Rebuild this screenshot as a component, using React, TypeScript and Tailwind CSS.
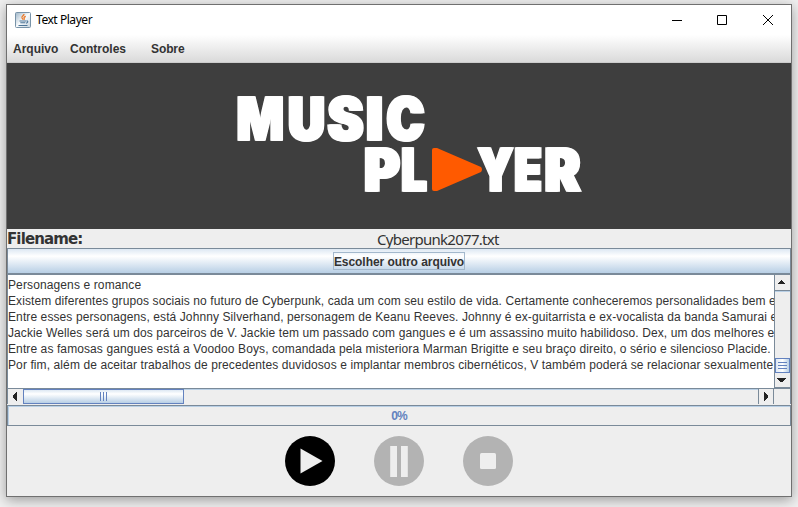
import React from "react";

const lines = [
  { text: "Personagens e romance", track: "tracking-[0.12px]" },
  { text: "Existem diferentes grupos sociais no futuro de Cyberpunk, cada um com seu estilo de vida. Certamente conheceremos personalidades bem e", track: "tracking-[0.095px]" },
  { text: "Entre esses personagens, está Johnny Silverhand, personagem de Keanu Reeves. Johnny é ex-guitarrista e ex-vocalista da banda Samurai e", track: "tracking-[0.1px]" },
  { text: "Jackie Welles será um dos parceiros de V. Jackie tem um passado com gangues e é um assassino muito habilidoso. Dex, um dos melhores e", track: "tracking-[0.095px]" },
  { text: "Entre as famosas gangues está a Voodoo Boys, comandada pela misteriora Marman Brigitte e seu braço direito, o sério e silencioso Placide.", track: "tracking-[0.1px]" },
  { text: "Por fim, além de aceitar trabalhos de precedentes duvidosos e implantar membros cibernéticos, V também poderá se relacionar sexualmente", track: "tracking-[0.1px]" },
];

type Glyph = { c: string; x: number; w: number; y: number };

const glyphs: Glyph[] = [
  { c: "M", x: 229.5, w: 47.5, y: 77 },
  { c: "U", x: 281.5, w: 36, y: 77 },
  { c: "S", x: 321, w: 35, y: 77 },
  { c: "I", x: 359.5, w: 16, y: 77 },
  { c: "C", x: 380, w: 37, y: 77 },
  { c: "P", x: 357.5, w: 35, y: 128 },
  { c: "L", x: 394.5, w: 25, y: 128 },
  { c: "Y", x: 471, w: 35, y: 128 },
  { c: "E", x: 507.5, w: 27, y: 128 },
  { c: "R", x: 538, w: 35, y: 128 },
];

function JavaIcon() {
  return (
    <svg width="16" height="16" viewBox="0 0 16 16" className="shrink-0">
      <defs>
        <linearGradient id="cup" x1="0" y1="0" x2="1" y2="1">
          <stop offset="0" stopColor="#9fb6c8" />
          <stop offset=".5" stopColor="#f7fafc" />
          <stop offset="1" stopColor="#c5d3dd" />
        </linearGradient>
      </defs>
      <rect x=".5" y=".5" width="15" height="15" rx="1" fill="url(#cup)" stroke="#7893a8" />
      <path d="M9 2c.3 1.700-2.800 2.200-2 4 .4.700 1 1 1 1.800M10.800 4.300c-1.800.7-2.200 1.300-1.600 2.100.4.500.1.900-.3 1.300" fill="none" stroke="#e8792b" strokeWidth="1.300" />
      <path d="M4.500 9h6.500M5.300 10.800h5M3.500 13.500h9M11.300 9c2-.5 2 1.800-.3 2.200" fill="none" stroke="#4d7597" strokeWidth="1.100" />
    </svg>
  );
}

function Logo() {
  return (
    <svg width="784" height="166" viewBox="0 0 784 166" className="block shrink-0 bg-[#3e3e3e]">
      {glyphs.map((g) => (
        <text
          key={g.c + g.x}
          x={g.x}
          y={g.y}
          textLength={g.w}
          lengthAdjust="spacingAndGlyphs"
          className={g.c === "M" ? "[text-shadow:0.8px_0_#fff,-0.8px_0_#fff]" : "[text-shadow:1.7px_0_#fff,-1.7px_0_#fff]"}
          fontFamily="Inter, sans-serif"
          fontWeight="900"
          fontSize="59"
          fill="#fff"
          stroke="#fff"
          strokeWidth="1.5"
        >
          {g.c}
        </text>
      ))}
      <path d="M427 85h3l44 19q2 2.500 0 5l-44 19h-3q-2 0-2-2V87q0-2 2-2z" fill="#ff5a00" />
    </svg>
  );
}

function Arrow({ d }: { d: string }) {
  return (
    <svg width="15" height="15" viewBox="0 0 15 15" shapeRendering="crispEdges">
      <path d={d} fill="#222" />
    </svg>
  );
}

export default function App() {
  return (
    <div className="h-[507px] w-[798px] overflow-hidden bg-[#f0f0f0] pl-[6px] pt-1 font-['Liberation_Sans',Arial,sans-serif] text-[#333]">
      <div className="flex h-[493px] w-[786px] flex-col border border-[#707070] bg-[#eee] shadow-[0_3px_12px_rgba(0,0,0,0.36)]">
        <header className="flex h-[30px] shrink-0 items-center bg-white pl-2">
          <JavaIcon />
          <span className="ml-[5px] font-['Noto_Sans',sans-serif] text-[12px] tracking-[-0.45px] text-black">Text Player</span>
          <svg className="ml-auto mr-[17px]" width="103" height="12" viewBox="0 0 103 12" fill="none" stroke="#000">
            <path d="M1 6.500h10M46.500 1.500h9v9h-9zM92 1l10 10M102 1L92 11" />
          </svg>
        </header>
        <nav className="flex h-7 shrink-0 items-center border-b border-[#ccc] bg-linear-to-b from-white to-[#dadada] pl-[6px] text-[12px] font-bold">
          <span className="w-[57px]">Arquivo</span>
          <span className="w-[81px]">Controles</span>
          <span className="tracking-[-0.1px]">Sobre</span>
        </nav>
        <Logo />
        <div className="flex h-[19px] shrink-0 items-center pt-px leading-[19px]">
          <span className="w-[370px] font-['DejaVu_Sans',sans-serif] text-[15px] font-bold tracking-[-0.88px]">Filename:</span>
          <span className="font-['Noto_Sans',sans-serif] text-[15px] tracking-[-0.72px]">Cyberpunk2077.txt</span>
        </div>
        <button className="flex h-[27px] shrink-0 items-center justify-center border border-b-2 border-[#7a8a99] bg-linear-to-b from-[#dde8f3] via-white via-30% to-[#b8cfe5] text-[12px] font-bold">
          <span className="flex h-[18px] w-[132px] items-center justify-center whitespace-nowrap border border-[#a3b8cc] pt-px tracking-[-0.05px]">Escolher outro arquivo</span>
        </button>
        <div className="flex h-[129px] shrink-0 flex-col border border-t-0 border-[#7a8a99] bg-white">
          <div className="flex h-[113px]">
            <div className="w-[766px] overflow-hidden pt-[2px] text-[12px] leading-4">
              {lines.map((l) => (
                <div key={l.text} className={"whitespace-nowrap " + l.track}>{l.text}</div>
              ))}
            </div>
            <div className="flex w-4 flex-col border-l border-[#7a8a99] bg-[#eee]">
              <div className="h-4 border-b border-[#7a8a99]"><Arrow d="M6 5h1v1h1v1h1v1h1v1H3V8h1V7h1V6h1z" /></div>
              <div className="h-[67px] border-t border-[#b8cfe5]" />
              <div className="flex h-[15px] flex-col items-center justify-center gap-px border border-[#6382bf] bg-linear-to-r from-[#dde8f3] via-white to-[#b8cfe5]">
                <i className="h-px w-[9px] bg-[#6382bf]" />
                <i className="mt-px h-px w-[9px] bg-[#6382bf]" />
                <i className="mt-px h-px w-[9px] bg-[#6382bf]" />
              </div>
              <div className="h-[15px] border-b border-[#7a8a99]"><Arrow d="M2 5h9v1h-1v1H9v1H8v1H5V8H4V7H3V6H2z" /></div>
            </div>
          </div>
          <div className="flex h-4 border-t border-[#7a8a99] bg-[#eee]">
            <div className="w-[15px]"><Arrow d="M9 3v9H8v-1H7v-1H6V9H5V6h1V5h1V4h1V3z" /></div>
            <div className="flex w-[161px] items-center justify-center gap-[2px] border border-[#6382bf] bg-linear-to-b from-[#dde8f3] via-white via-30% to-[#b8cfe5]">
              <i className="h-[9px] w-px bg-[#6382bf]" />
              <i className="h-[9px] w-px bg-[#6382bf]" />
              <i className="h-[9px] w-px bg-[#6382bf]" />
            </div>
            <div className="flex-1 border-t border-[#b8cfe5]" />
            <div className="w-4 border-x border-[#7a8a99]"><Arrow d="M5 3v9h1v-1h1v-1h1V9h1V6H8V5H7V4H6V3z" /></div>
            <div className="w-4" />
          </div>
        </div>
        <div className="mt-px flex h-[21px] shrink-0 items-center justify-center border border-[#7a8a99] text-[12px] font-bold tracking-[-0.8px] text-[#6382bf] shadow-[inset_1px_1px_#b8cfe5]">0%</div>
        <footer className="flex flex-1 items-start justify-center gap-[39px] pt-[10px]">
          <svg width="50" height="50" viewBox="0 0 50 50"><circle cx="25" cy="25" r="25" fill="#000" /><path d="M15.500 12.500l22 12.500-22 12.500z" fill="#eee" /></svg>
          <svg width="50" height="50" viewBox="0 0 50 50"><circle cx="25" cy="25" r="25" fill="#b3b3b3" /><path d="M16.200 10h6.800v31h-6.800zM27 10h6.800v31H27z" fill="#eee" /></svg>
          <svg width="50" height="50" viewBox="0 0 50 50"><circle cx="25" cy="25" r="25" fill="#b3b3b3" /><rect x="17" y="17" width="16" height="16" rx="1.500" fill="#eee" /></svg>
        </footer>
      </div>
    </div>
  );
}
